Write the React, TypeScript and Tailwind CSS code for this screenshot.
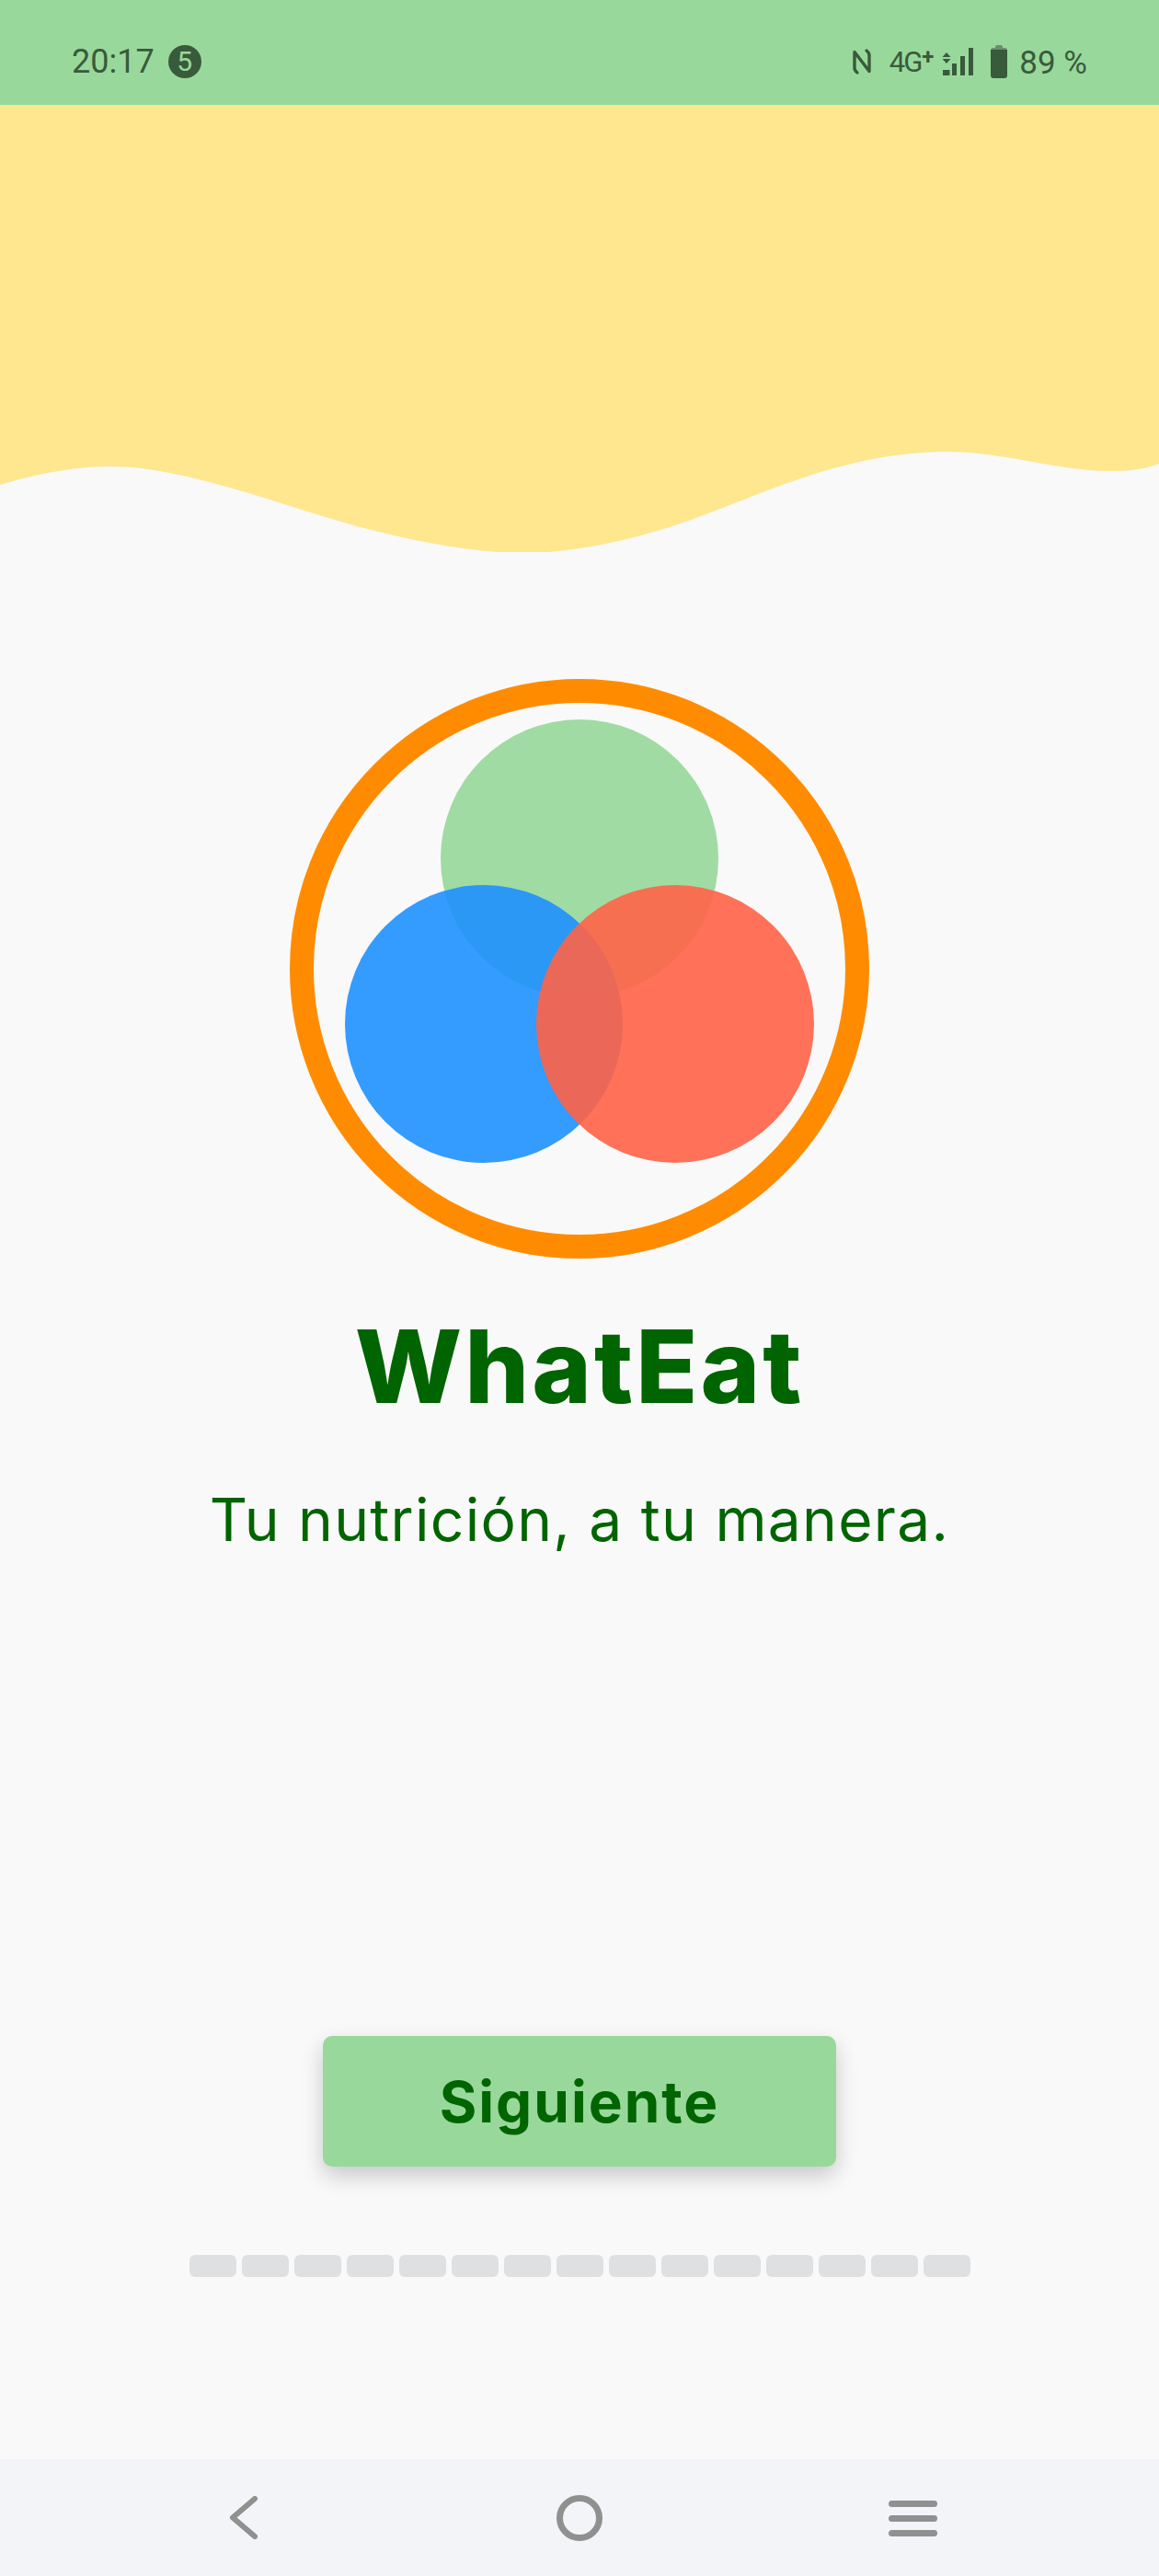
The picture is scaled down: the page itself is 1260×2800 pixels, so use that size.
import React from "react";

const segments = Array.from({ length: 15 }, (_, i) => i);

const StatusBar = () => (
  <div className="h-[114px] bg-[#98d99b] flex items-start justify-between text-[#3a5a3c] font-['Roboto',sans-serif]">
    <div className="flex items-center ml-[78px] mt-[49px] h-[36px]">
      <span className="text-[36px] leading-none">20:17</span>
      <span className="ml-[15px] w-[36px] h-[36px] rounded-full bg-[#3a5a3c] text-[#98d99b] text-[30px] leading-none flex items-center justify-center">5</span>
    </div>
    <div className="flex items-center mt-[49px] h-[36px] mr-[78px]">
      {/* nfc */}
      <svg className="-ml-[2px]" width="20" height="30" viewBox="0 0 20 30" fill="none" stroke="#3a5a3c" strokeWidth="3.4" strokeLinecap="round" strokeLinejoin="round">
        <path d="M5 27 C2.5 25 2 24 2 22 V4.5 L18 25.5 V8 C18 6 17.5 5 15 3" />
      </svg>
      <span className="ml-[20px] text-[31px] leading-none tracking-[-2px]">4G</span>
      <span className="text-[24px] leading-none font-bold -mt-[10px] ml-[1px]">+</span>
      {/* signal */}
      <svg className="ml-[9px]" width="34" height="30" viewBox="0 0 34 30" fill="#3a5a3c">
        <path d="M5 5 L9.5 10 H0.5 Z M0.5 12 H9.5 L5 17 Z" />
        <rect x="1" y="24" width="7.5" height="6" />
        <rect x="11" y="17" width="5" height="13" />
        <rect x="20" y="9" width="5" height="21" />
        <rect x="29" y="0" width="5" height="30" />
      </svg>
      {/* battery */}
      <svg className="ml-[19px]" width="18" height="36" viewBox="0 0 18 36">
        <path d="M5 2 Q5 0 7 0 H11 Q13 0 13 2 V3 H15 Q18 3 18 6 V7 H0 V6 Q0 3 3 3 H5 Z" fill="#6b8f6d" />
        <path d="M0 5 H18 V33 Q18 36 15 36 H3 Q0 36 0 33 Z" fill="#3a5a3c" />
      </svg>
      <span className="ml-[13px] text-[35px] leading-none mt-[2px]">89 %</span>
    </div>
  </div>
);

const Wave = () => (
  <svg className="block w-full h-[486px]" viewBox="0 114 1260 486" preserveAspectRatio="none">
    <path
      d="M0 527 C30 518 75 507 120 507 C170 507 225 523 267 535 C320 551 375 570 420 580 C470 592 520 601 570 601 C640 601 720 578 770 558 C840 532 925 491 1030 491 C1090 491 1150 512 1207 512 C1230 512 1245 510 1260 504 V114 H0 Z"
      fill="#fee78f"
    />
  </svg>
);

const Logo = () => (
  <svg className="block mx-auto mt-[138px]" width="630" height="630" viewBox="0 0 630 630">
    <circle cx="315" cy="315" r="302" fill="none" stroke="#ff8c00" strokeWidth="26" />
    <circle cx="315" cy="195" r="151" fill="#a0dba3" />
    <circle cx="211" cy="375" r="151" fill="#1e90ff" fillOpacity="0.9" />
    <circle cx="419" cy="375" r="151" fill="#ff6347" fillOpacity="0.9" />
  </svg>
);

export default function App() {
  return (
    <div className="h-[2800px] bg-[#f9f9f9] flex flex-col overflow-hidden">
      <StatusBar />
      <Wave />
      <Logo />
      <h1 className="mt-[57px] text-center text-[#006400] text-[110px] leading-[120px] font-extrabold tracking-[3px] font-['Inter',sans-serif]">WhatEat</h1>
      <p className="mt-[67px] text-center text-[#006400] text-[64px] leading-[80px] tracking-[1.3px] font-['Inter',sans-serif]">Tu nutrición, a tu manera.</p>

      <button className="mt-[521px] mx-auto w-[558px] h-[142px] rounded-[10px] bg-[#98d99b] text-[#006400] text-[62px] tracking-[2px] font-bold font-['Inter',sans-serif] shadow-[0_10px_24px_rgba(0,0,0,0.2)]">Siguiente</button>

      <div className="mt-[96px] flex justify-center gap-[6px]">
        {segments.map((i) => (
          <div key={i} className="w-[51px] h-[24px] rounded-[6px] bg-[#dfe0e2]" />
        ))}
      </div>

      <div className="mt-auto h-[127px] bg-[#f3f4f8] flex items-start">
        <div className="ml-[249px] mt-[40px]">
          <svg className="block" width="32" height="47" viewBox="0 0 32 47" fill="none" stroke="#909090" strokeWidth="6" strokeLinecap="round" strokeLinejoin="round">
            <path d="M28 3 L4 23.5 L28 44" />
          </svg>
        </div>
        <div className="ml-[324px] mt-[39px] w-[50px] h-[50px] rounded-full border-[7px] border-[#909090]" />
        <div className="ml-[311px] mt-[45px] w-[53px] flex flex-col gap-[9px]">
          <div className="h-[7px] rounded-full bg-[#909090]" />
          <div className="h-[7px] rounded-full bg-[#909090]" />
          <div className="h-[7px] rounded-full bg-[#909090]" />
        </div>
      </div>
    </div>
  );
}
